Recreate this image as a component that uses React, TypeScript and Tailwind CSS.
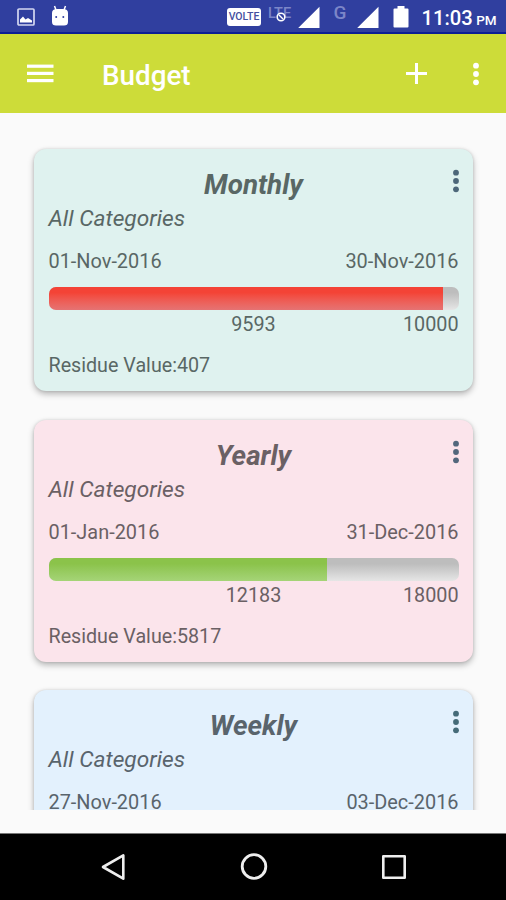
import React from "react";

type Budget = {
  title: string;
  from: string;
  to: string;
  progress?: { spent: number; limit: number; fillWidth: number; fill: string };
  card: string;
  dots: string;
};

const budgets: Budget[] = [
  {
    title: "Monthly",
    from: "01-Nov-2016",
    to: "30-Nov-2016",
    progress: {
      spent: 9593,
      limit: 10000,
      fillWidth: 394,
      fill: "bg-linear-to-b from-[#f44336] from-25% to-[#e57373]",
    },
    card: "bg-[#dff2ef] text-[#596765]",
    dots: "text-[#4d6779]",
  },
  {
    title: "Yearly",
    from: "01-Jan-2016",
    to: "31-Dec-2016",
    progress: {
      spent: 12183,
      limit: 18000,
      fillWidth: 278,
      fill: "bg-linear-to-b from-[#8bc34a] from-25% to-[#a5d477]",
    },
    card: "bg-[#fbe4eb] text-[#6a6064]",
    dots: "text-[#52677c]",
  },
  {
    title: "Weekly",
    from: "27-Nov-2016",
    to: "03-Dec-2016",
    card: "bg-[#e3f1fd] text-[#59646c]",
    dots: "text-[#456b78]",
  },
];

function Dots({ className }: { className: string }) {
  return (
    <svg width="8" height="24" viewBox="0 0 8 24" fill="currentColor" className={className}>
      <circle cx="4" cy="3.7" r="2.9" />
      <circle cx="4" cy="12" r="2.9" />
      <circle cx="4" cy="20.3" r="2.9" />
    </svg>
  );
}

function Signal() {
  return (
    <svg width="22" height="22" viewBox="0 0 22 22" className="mt-[6px]">
      <path d="M21.5 .7V22H.2Z" fill="#fff" />
    </svg>
  );
}

function StatusBar() {
  return (
    <header className="flex h-[34px] shrink-0 items-start border-b-2 border-[#0c1f94] bg-[#303f9f] text-white">
      <svg width="18" height="18" viewBox="0 0 18 18" className="mt-[8px] ml-[16.5px]">
        <rect x="1" y="1" width="16" height="16" rx="1" fill="none" stroke="#d3d8f1" strokeWidth="1.7" />
        <path d="M3 14.5V11.5L6 8.5L8.5 11.5L11 10L15 12.5V14.5Z" fill="#fff" />
      </svg>
      <svg width="18" height="21" viewBox="0 0 18 21" className="mt-[5px] ml-[16.5px]">
        <path d="M3.5 1L5 5M14.5 1L13 5" stroke="#fff" strokeWidth="1.5" />
        <path d="M1 8Q1 4 6 4H12Q17 4 17 8V17Q17 20.5 13 20.5H5Q1 20.5 1 17Z" fill="#fff" />
        <circle cx="5.2" cy="12" r="1" fill="#303f9f" />
        <circle cx="12.3" cy="12" r="1" fill="#303f9f" />
      </svg>
      <span className="mt-[8px] ml-[158px] flex h-[18px] w-[34px] items-center justify-center rounded-[3px] bg-white text-[10.5px] font-medium text-[#45509f]">
        VOLTE
      </span>
      <span className="relative mt-[6.5px] ml-[7px] w-[25px] text-[14.5px] leading-[14px] font-medium text-[#7c86c8]">
        LTE
        <svg width="10" height="10" viewBox="0 0 10 10" className="absolute top-[5px] left-[8px]">
          <circle cx="5" cy="5" r="3.8" fill="#303f9f" stroke="#fff" strokeWidth="1.6" />
          <path d="M3 3L7 7" stroke="#fff" strokeWidth="1.4" />
        </svg>
      </span>
      <span className="ml-[5px] flex"><Signal /></span>
      <span className="mt-[4px] ml-[13.5px] w-[13px] text-[19px] leading-[18px] font-medium text-[#7c86c8]">G</span>
      <span className="ml-[10.5px] flex"><Signal /></span>
      <svg width="16" height="22" viewBox="0 0 16 22" className="mt-[6px] ml-[14px]">
        <path d="M4.5 0H11.5V2.5H14.5Q15.5 2.5 15.5 3.5V20.5Q15.5 21.5 14.5 21.5H1.5Q.5 21.5 .5 20.5V3.5Q.5 2.5 1.5 2.5H4.5Z" fill="#fff" />
      </svg>
      <span className="mt-[6px] ml-[12.5px] text-[20.2px] leading-[24px] font-medium whitespace-nowrap">
        11:03<span className="ml-[3.5px] text-[13.5px]">PM</span>
      </span>
    </header>
  );
}

function AppBar() {
  return (
    <div className="flex h-[79px] shrink-0 items-center bg-[#cddc39] text-white">
      <svg width="27" height="19" viewBox="0 0 27 19" fill="#fff" className="-mt-px ml-[26.5px]">
        <rect width="26.5" height="3.2" y=".6" />
        <rect width="26.5" height="3.2" y="7.8" />
        <rect width="26.5" height="3.2" y="15" />
      </svg>
      <h1 className="mt-[5px] ml-[48.5px] text-[27.8px] leading-8 font-medium">Budget</h1>
      <svg width="21" height="21" viewBox="0 0 21 21" className="mr-[45px] -mt-px ml-auto">
        <path d="M10.5 0V21M0 10.5H21" stroke="#fff" strokeWidth="3" />
      </svg>
      <Dots className="mr-[26px]" />
    </div>
  );
}

function BudgetCard({ b }: { b: Budget }) {
  return (
    <section
      className={`relative h-[242px] shrink-0 rounded-[12px] pt-[19px] pr-[14px] pl-[15px] shadow-[0_3px_6px_rgba(0,0,0,0.28),0_0_3px_rgba(0,0,0,0.12)] ${b.card}`}
    >
      <h2 className="text-center text-[27.8px] leading-[34px] font-bold italic">{b.title}</h2>
      <Dots className={`absolute top-[20px] right-[13px] ${b.dots}`} />
      <p className="pt-px text-[22.7px] leading-[32px] italic">All Categories</p>
      <div className="mt-[15px] flex justify-between text-[19.9px] leading-[24px]">
        <span>{b.from}</span>
        <span>{b.to}</span>
      </div>
      {b.progress && (
        <>
          <div className="mt-[13px] h-[23px] overflow-hidden rounded-[7px] bg-linear-to-b from-[#bdbdbd] from-25% to-[#e6e6e6]">
            <div className={`h-full ${b.progress.fill}`} style={{ width: b.progress.fillWidth }} />
          </div>
          <div className="mt-[3px] grid grid-cols-3 text-[19.8px] leading-[24px]">
            <span className="col-start-2 text-center">{b.progress.spent}</span>
            <span className="text-right">{b.progress.limit}</span>
          </div>
          <p className="mt-[17px] text-[19.7px] leading-[24px]">
            Residue Value:{b.progress.limit - b.progress.spent}
          </p>
        </>
      )}
    </section>
  );
}

function NavBar() {
  return (
    <nav className="flex h-[67px] shrink-0 items-center border-t border-[#777] bg-black">
      <svg width="26" height="28" viewBox="0 0 26 28" fill="none" stroke="#eee" strokeWidth="2.6" strokeLinejoin="round" className="ml-[100px]">
        <path d="M23.3 2.3V25.7L3 14Z" />
      </svg>
      <svg width="28" height="28" viewBox="0 0 28 28" fill="none" stroke="#eee" strokeWidth="2.8" className="ml-[113.5px]">
        <circle cx="14" cy="13.5" r="11.8" />
      </svg>
      <svg width="26" height="26" viewBox="0 0 26 26" fill="none" stroke="#eee" strokeWidth="2.6" strokeLinejoin="round" className="ml-[113.5px]">
        <rect x="2.3" y="2.3" width="21.4" height="21.4" />
      </svg>
    </nav>
  );
}

export default function App() {
  return (
    <div className="flex h-[900px] w-[506px] flex-col overflow-hidden bg-[#fafafa] font-['Roboto',sans-serif]">
      <StatusBar />
      <AppBar />
      <main className="flex h-[697px] shrink-0 flex-col gap-[28.7px] overflow-hidden px-[33.5px] pt-[36px]">
        {budgets.map((b) => (
          <BudgetCard key={b.title} b={b} />
        ))}
      </main>
      <div className="grow" />
      <NavBar />
    </div>
  );
}
